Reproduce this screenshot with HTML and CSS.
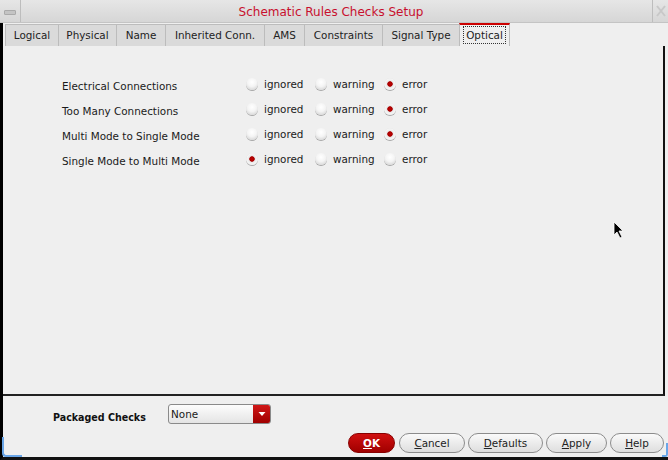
FILE: index.html
```html
<!DOCTYPE html>
<html>
<head>
<meta charset="utf-8">
<link rel="stylesheet" href="styles.css">
</head>
<body>
<div class="win">
  <div class="titlebar">
    <div class="tb-btn"><span class="minbox"></span></div>
    <div class="title">Schematic Rules Checks Setup</div>
    <div class="tb-close"><svg width="12" height="14" viewBox="0 0 12 14"><path d="M2 2 L10 12 M10 2 L2 12" stroke="#c8c8c8" stroke-width="2" fill="none"/></svg></div>
  </div>
  <div class="body">
    <div class="tabs">
      <div class="tab t-logical">Logical</div>
      <div class="tab t-physical">Physical</div>
      <div class="tab t-name">Name</div>
      <div class="tab t-inh">Inherited Conn.</div>
      <div class="tab t-ams">AMS</div>
      <div class="tab t-cons">Constraints</div>
      <div class="tab t-sig">Signal Type</div>
      <div class="tab t-opt active"><span class="focus">Optical</span></div>
    </div>
    <div class="panel">
      <div class="rules">
        <div class="lbl">Electrical Connections</div>
        <div class="opt"><span class="radio"></span>ignored</div>
        <div class="opt"><span class="radio"></span>warning</div>
        <div class="opt"><span class="radio on"></span>error</div>

        <div class="lbl">Too Many Connections</div>
        <div class="opt"><span class="radio"></span>ignored</div>
        <div class="opt"><span class="radio"></span>warning</div>
        <div class="opt"><span class="radio on"></span>error</div>

        <div class="lbl">Multi Mode to Single Mode</div>
        <div class="opt"><span class="radio"></span>ignored</div>
        <div class="opt"><span class="radio"></span>warning</div>
        <div class="opt"><span class="radio on"></span>error</div>

        <div class="lbl">Single Mode to Multi Mode</div>
        <div class="opt"><span class="radio on"></span>ignored</div>
        <div class="opt"><span class="radio"></span>warning</div>
        <div class="opt"><span class="radio"></span>error</div>
      </div>
      <div class="cursor"><svg width="12" height="18" viewBox="0 0 12 18"><path d="M1 1 L1 14 L4 11 L7 17 L9 16 L6 10 L10 10 Z" fill="#000" stroke="#fff" stroke-width="0.8"/></svg></div>
    </div>
    <div class="footer">
      <div class="pk-row">
        <div class="pk-label">Packaged Checks</div>
        <div class="combo"><span class="combo-text">None</span><span class="combo-btn"><svg width="8" height="6" viewBox="0 0 8 6"><path d="M0.5 1 L7.5 1 L4 5 Z" fill="#fff"/></svg></span></div>
      </div>
      <div class="btn-row">
        <div class="btn ok"><u>O</u>K</div>
        <div class="btn cancel"><u>C</u>ancel</div>
        <div class="btn defaults"><u>D</u>efaults</div>
        <div class="btn apply"><u>A</u>pply</div>
        <div class="btn help"><u>H</u>elp</div>
      </div>
    </div>
    <div class="corner-l"></div>
    <div class="corner-r"></div>
  </div>
</div>
</body>
</html>
```
FILE: styles.css
```css
* { box-sizing: border-box; }
html, body { margin: 0; padding: 0; }
body {
  width: 668px; height: 460px; overflow: hidden;
  background: #efefef;
  font-family: "DejaVu Sans", sans-serif;
  font-size: 10.4px;
  color: #1a1a1a;
}
.win { width: 668px; height: 460px; display: flex; flex-direction: column; }
.titlebar {
  height: 23px; display: flex; align-items: stretch;
  background: linear-gradient(#e6e6e6, #d6d6d6);
  border-bottom: 1px solid #c4c4c4;
}
.tb-btn { width: 21px; border-right: 1px solid #bdbdbd; display: flex; align-items: center; justify-content: center; }
.minbox { width: 12px; height: 5px; background: #c4c4c4; border: 1px solid #aaa; border-radius: 1px; margin-top: 2px; }
.title { flex: 1; text-align: center; color: #c8102e; font-size: 12px; line-height: 24px; padding-right: 11px; }
.tb-close { width: 16px; border-left: 1px solid #bdbdbd; display: flex; align-items: center; justify-content: center; }
.body {
  position: relative; flex: 1; display: flex; flex-direction: column;
  border-left: 3px solid #000; border-bottom: 3px solid #111;
}
.tabs { display: flex; padding-left: 2px; height: 23px; align-items: flex-end; }
.tab {
  height: 22px; line-height: 20px; text-align: center;
  background: #dadada; border: 1px solid #bcbcbc; border-bottom: none; margin-right: -1px;
  color: #222;
}
.t-logical { width: 54px; }
.t-physical { width: 59px; }
.t-name { width: 50px; }
.t-inh { width: 100px; }
.t-ams { width: 41px; }
.t-cons { width: 79px; }
.t-sig { width: 78px; }
.t-opt { width: 51px; }
.tab.active { background: #efefef; border-top: 2px solid #c00; height: 23px; line-height: 18px; }
.focus { border: 1px dotted #333; padding: 0 2px; display: inline-block; line-height: 16px; margin-top: 1px; }
.panel {
  position: relative; flex: 1; background: #efefef;
  border-right: 2px solid #111; border-bottom: 2px solid #222;
  margin-right: 3px;
}
.rules {
  display: grid; grid-template-columns: 184px 69px 69px auto;
  grid-auto-rows: 25px; align-items: center;
  padding: 25px 0 0 59px;
}
.lbl { padding-top: 4px; }
.opt { display: flex; align-items: center; gap: 6px; margin-left: 0; }
.radio {
  width: 12px; height: 12px; border-radius: 50%;
  background: radial-gradient(circle at 50% 35%, #ffffff 0%, #f4f4f4 45%, #d8d8d8 80%, #b8b8b8 100%);
  box-shadow: 0 1px 0 #a8a8a8;
}
.radio.on {
  background: radial-gradient(circle at 50% 50%, #c00000 0%, #a80000 28%, #e8e8e8 36%, #f4f4f4 60%, #c8c8c8 100%);
}
.cursor { position: absolute; left: 610px; top: 175px; }
.footer { height: 61px; display: flex; flex-direction: column; margin-right: 3px; }
.pk-row { display: flex; align-items: center; padding: 8px 0 0 50px; height: 28px; }
.pk-label { font-family: "DejaVu Sans Condensed", "DejaVu Sans", sans-serif; font-stretch: condensed; font-size: 10.6px; font-weight: bold; width: 115px; padding-top: 6px; color: #111; }
.combo {
  width: 103px; height: 20px; display: flex; border: 1px solid #8a8a8a; border-radius: 3px;
  background: linear-gradient(#fdfdfd, #e4e4e4); overflow: hidden;
}
.combo-text { flex: 1; padding-left: 2px; line-height: 18px; }
.combo-btn { width: 17px; background: linear-gradient(#d01818, #a00000); display: flex; align-items: center; justify-content: center; }
.btn-row { display: flex; justify-content: flex-end; gap: 3px; padding-top: 9px; padding-right: 1px; }
.btn {
  height: 20px; line-height: 18px; text-align: center; border-radius: 10px;
  border: 1px solid #8c8c8c; background: linear-gradient(#fafafa, #dedede);
  color: #222;
}
.btn u { text-decoration: underline; }
.ok { width: 47px; background: linear-gradient(#d01010, #a00000); border-color: #800; color: #fff; font-weight: bold; margin-right: 1px; }
.cancel { width: 66px; }
.defaults { width: 75px; }
.apply { width: 61px; }
.help { width: 54px; }
.corner-l { position: absolute; left: -1px; bottom: 0; width: 20px; height: 20px; border-left: 2px solid #6aa6e8; border-bottom: 2px solid #6aa6e8; border-bottom-left-radius: 4px; }
.corner-r { position: absolute; right: 0; bottom: 0; width: 6px; height: 14px; border-right: 2px solid #6aa6e8; border-bottom: 2px solid #6aa6e8; border-bottom-right-radius: 3px; }
```
